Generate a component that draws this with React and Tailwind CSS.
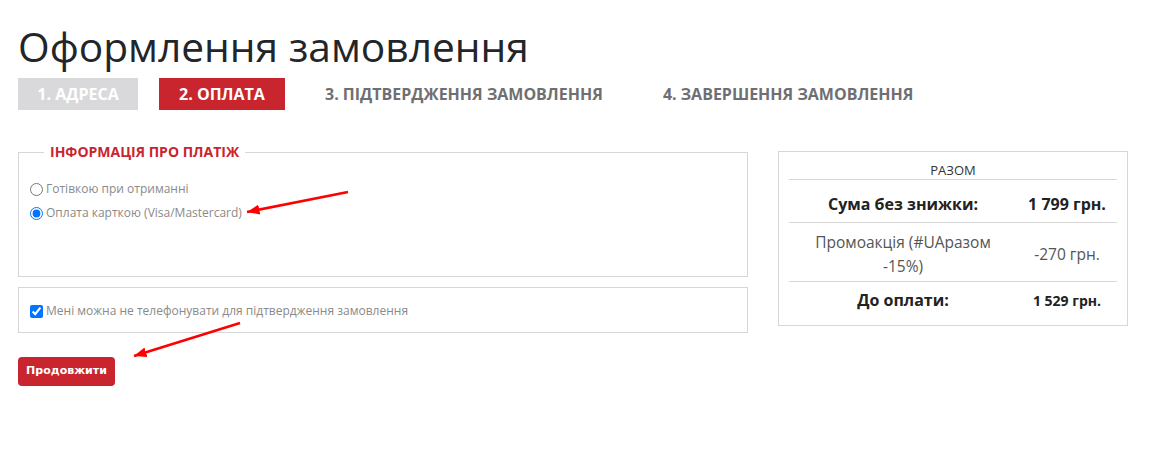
import React from 'react'

const font = { fontFamily: '"Open Sans", "Noto Sans", sans-serif' }

function Arrow({ x1, y1, x2, y2 }) {
  return (
    <line x1={x1} y1={y1} x2={x2} y2={y2} stroke="#f00" strokeWidth="2.5" markerEnd="url(#head)" />
  )
}

export default function App() {
  return (
    <div className="relative h-[461px] w-[1153px] overflow-hidden bg-white" style={font}>
      <div className="px-[18px] pt-[22px]">
        <h1 className="text-[40.7px] leading-[48px] text-[#222529]">Оформлення замовлення</h1>
        <div className="mt-[8px] flex h-[32px] items-stretch text-[16px] font-bold">
          <div className="flex w-[120px] items-center justify-center bg-[#d9d9db] text-white">1. АДРЕСА</div>
          <div className="ml-[21px] flex w-[126px] items-center justify-center bg-[#c9252e] text-white">2. ОПЛАТА</div>
          <div className="ml-[40px] flex items-center text-[#6f6f73]">3. ПІДТВЕРДЖЕННЯ ЗАМОВЛЕННЯ</div>
          <div className="ml-[60px] flex items-center text-[#6f6f73]">4. ЗАВЕРШЕННЯ ЗАМОВЛЕННЯ</div>
        </div>

        <div className="mt-[34px] flex items-start">
          <div className="w-[730px]">
            <fieldset className="h-[133px] border border-[#d7d7d7] px-[11px]">
              <legend className="ml-[14px] px-[6px] text-[14px] font-bold leading-[16px] text-[#c9252e]">
                ІНФОРМАЦІЯ ПРО ПЛАТІЖ
              </legend>
              <div className="mt-[21px] flex flex-col gap-[8px] text-[12px] leading-[16px] text-[#8a8a8a]">
                <label className="flex items-center gap-[3px]">
                  <input type="radio" name="pay" className="m-0 h-[13px] w-[13px]" />
                  Готівкою при отриманні
                </label>
                <label className="flex items-center gap-[3px]">
                  <input type="radio" name="pay" defaultChecked className="m-0 h-[13px] w-[13px]" />
                  Оплата карткою (Visa/Mastercard)
                </label>
              </div>
            </fieldset>
            <div className="mt-[10px] flex h-[46px] items-center border border-[#d7d7d7] px-[11px] pt-[2px] text-[12px] text-[#8a8a8a]">
              <label className="flex items-center gap-[3px]">
                <input type="checkbox" defaultChecked className="m-0 h-[13px] w-[13px]" />
                Мені можна не телефонувати для підтвердження замовлення
              </label>
            </div>
            <button
              className="mt-[24px] h-[29px] w-[97px] rounded-[4px] bg-[#c9252e] text-[11px] font-bold text-white"
              style={{ fontFamily: '"DejaVu Sans", sans-serif' }}
            >
              Продовжити
            </button>
          </div>

          <div className="ml-[30px] mt-[7px] h-[175px] w-[350px] border border-[#d7d7d7] px-[10px] pt-[10px]">
            <div className="border-b border-[#d7d7d7] text-center text-[13px] leading-[17px] text-[#333]">РАЗОМ</div>
            <div className="flex h-[43px] items-center border-b border-[#d7d7d7] pt-[6px] text-[16px] font-bold text-[#222]">
              <div className="w-[228px] text-center">Сума без знижки:</div>
              <div className="flex-1 text-center">1 799 грн.</div>
            </div>
            <div className="flex h-[59px] items-center border-b border-[#d7d7d7] pt-[4px] text-[15.5px] leading-[24px] text-[#555]">
              <div className="w-[228px] px-[22px] text-center">Промоакція (#UAразом -15%)</div>
              <div className="flex-1 text-center">-270 грн.</div>
            </div>
            <div className="flex h-[36px] items-center font-bold text-[#222]">
              <div className="w-[228px] text-center text-[16px]">До оплати:</div>
              <div className="flex-1 text-center text-[14px]">1 529 грн.</div>
            </div>
          </div>
        </div>
      </div>

      <svg className="pointer-events-none absolute left-0 top-0" width="1153" height="461">
        <defs>
          <marker id="head" markerWidth="5" markerHeight="4" refX="5" refY="2" orient="auto" markerUnits="strokeWidth">
            <path d="M0,0 L5,2 L0,4 Z" fill="#f00" />
          </marker>
        </defs>
        <Arrow x1={348} y1={192} x2={247} y2={212} />
        <Arrow x1={240} y1={323} x2={134} y2={356} />
      </svg>
    </div>
  )
}
